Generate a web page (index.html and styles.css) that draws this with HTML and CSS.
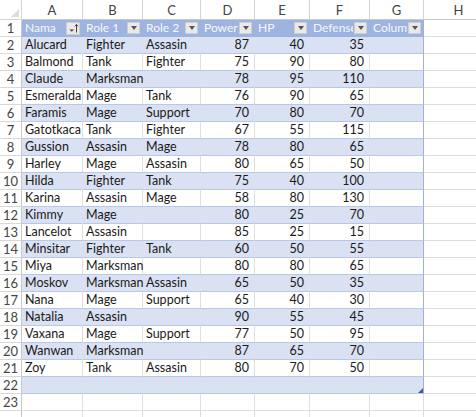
FILE: index.html
```html
<!DOCTYPE html>
<html>
<head>
<meta charset="utf-8">
<link rel="stylesheet" href="styles.css">
</head>
<body>
<div class="sheet">
  <div class="corner"><span class="tri"></span></div>
  <div class="ch">A</div><div class="ch">B</div><div class="ch">C</div><div class="ch">D</div><div class="ch">E</div><div class="ch">F</div><div class="ch">G</div><div class="ch">H</div>

  <div class="rh">1</div>
  <div class="c th"><span class="lbl">Nama</span><span class="dd sort"><svg width="11" height="10" viewBox="0 0 11 10"><path d="M1.5 6.5h4.5l-2.25 2.25z" fill="#444"/><path d="M8.5 9.5V1.5M6.8 3.3L8.5 1.5 10.2 3.3" stroke="#444" stroke-width="1" fill="none"/></svg></span></div>
  <div class="c th"><span class="lbl">Role 1</span><span class="dd"><i class="arr"></i></span></div>
  <div class="c th"><span class="lbl">Role 2</span><span class="dd"><i class="arr"></i></span></div>
  <div class="c th"><span class="lbl">Power</span><span class="dd"><i class="arr"></i></span></div>
  <div class="c th"><span class="lbl">HP</span><span class="dd"><i class="arr"></i></span></div>
  <div class="c th"><span class="lbl">Defense</span><span class="dd"><i class="arr"></i></span></div>
  <div class="c th last"><span class="lbl">Column1</span><span class="dd"><i class="arr"></i></span></div>
  <div class="c"></div>

  <div class="rh">2</div><div class="c t band"><span>Alucard</span></div><div class="c t band"><span>Fighter</span></div><div class="c t band"><span>Assasin</span></div><div class="c t band num">87</div><div class="c t band num">40</div><div class="c t band num">35</div><div class="c t band last"></div><div class="c"></div>
  <div class="rh">3</div><div class="c t"><span>Balmond</span></div><div class="c t"><span>Tank</span></div><div class="c t"><span>Fighter</span></div><div class="c t num">75</div><div class="c t num">90</div><div class="c t num">80</div><div class="c t last"></div><div class="c"></div>
  <div class="rh">4</div><div class="c t band"><span>Claude</span></div><div class="c t band"><span>Marksman</span></div><div class="c t band"></div><div class="c t band num">78</div><div class="c t band num">95</div><div class="c t band num">110</div><div class="c t band last"></div><div class="c"></div>
  <div class="rh">5</div><div class="c t"><span>Esmeralda</span></div><div class="c t"><span>Mage</span></div><div class="c t"><span>Tank</span></div><div class="c t num">76</div><div class="c t num">90</div><div class="c t num">65</div><div class="c t last"></div><div class="c"></div>
  <div class="rh">6</div><div class="c t band"><span>Faramis</span></div><div class="c t band"><span>Mage</span></div><div class="c t band"><span>Support</span></div><div class="c t band num">70</div><div class="c t band num">80</div><div class="c t band num">70</div><div class="c t band last"></div><div class="c"></div>
  <div class="rh">7</div><div class="c t"><span>Gatotkaca</span></div><div class="c t"><span>Tank</span></div><div class="c t"><span>Fighter</span></div><div class="c t num">67</div><div class="c t num">55</div><div class="c t num">115</div><div class="c t last"></div><div class="c"></div>
  <div class="rh">8</div><div class="c t band"><span>Gussion</span></div><div class="c t band"><span>Assasin</span></div><div class="c t band"><span>Mage</span></div><div class="c t band num">78</div><div class="c t band num">80</div><div class="c t band num">65</div><div class="c t band last"></div><div class="c"></div>
  <div class="rh">9</div><div class="c t"><span>Harley</span></div><div class="c t"><span>Mage</span></div><div class="c t"><span>Assasin</span></div><div class="c t num">80</div><div class="c t num">65</div><div class="c t num">50</div><div class="c t last"></div><div class="c"></div>
  <div class="rh">10</div><div class="c t band"><span>Hilda</span></div><div class="c t band"><span>Fighter</span></div><div class="c t band"><span>Tank</span></div><div class="c t band num">75</div><div class="c t band num">40</div><div class="c t band num">100</div><div class="c t band last"></div><div class="c"></div>
  <div class="rh">11</div><div class="c t"><span>Karina</span></div><div class="c t"><span>Assasin</span></div><div class="c t"><span>Mage</span></div><div class="c t num">58</div><div class="c t num">80</div><div class="c t num">130</div><div class="c t last"></div><div class="c"></div>
  <div class="rh">12</div><div class="c t band"><span>Kimmy</span></div><div class="c t band"><span>Mage</span></div><div class="c t band"></div><div class="c t band num">80</div><div class="c t band num">25</div><div class="c t band num">70</div><div class="c t band last"></div><div class="c"></div>
  <div class="rh">13</div><div class="c t"><span>Lancelot</span></div><div class="c t"><span>Assasin</span></div><div class="c t"></div><div class="c t num">85</div><div class="c t num">25</div><div class="c t num">15</div><div class="c t last"></div><div class="c"></div>
  <div class="rh">14</div><div class="c t band"><span>Minsitar</span></div><div class="c t band"><span>Fighter</span></div><div class="c t band"><span>Tank</span></div><div class="c t band num">60</div><div class="c t band num">50</div><div class="c t band num">55</div><div class="c t band last"></div><div class="c"></div>
  <div class="rh">15</div><div class="c t"><span>Miya</span></div><div class="c t"><span>Marksman</span></div><div class="c t"></div><div class="c t num">80</div><div class="c t num">80</div><div class="c t num">65</div><div class="c t last"></div><div class="c"></div>
  <div class="rh">16</div><div class="c t band"><span>Moskov</span></div><div class="c t band"><span>Marksman</span></div><div class="c t band"><span>Assasin</span></div><div class="c t band num">65</div><div class="c t band num">50</div><div class="c t band num">35</div><div class="c t band last"></div><div class="c"></div>
  <div class="rh">17</div><div class="c t"><span>Nana</span></div><div class="c t"><span>Mage</span></div><div class="c t"><span>Support</span></div><div class="c t num">65</div><div class="c t num">40</div><div class="c t num">30</div><div class="c t last"></div><div class="c"></div>
  <div class="rh">18</div><div class="c t band"><span>Natalia</span></div><div class="c t band"><span>Assasin</span></div><div class="c t band"></div><div class="c t band num">90</div><div class="c t band num">55</div><div class="c t band num">45</div><div class="c t band last"></div><div class="c"></div>
  <div class="rh">19</div><div class="c t"><span>Vaxana</span></div><div class="c t"><span>Mage</span></div><div class="c t"><span>Support</span></div><div class="c t num">77</div><div class="c t num">50</div><div class="c t num">95</div><div class="c t last"></div><div class="c"></div>
  <div class="rh">20</div><div class="c t band"><span>Wanwan</span></div><div class="c t band"><span>Marksman</span></div><div class="c t band"></div><div class="c t band num">87</div><div class="c t band num">65</div><div class="c t band num">70</div><div class="c t band last"></div><div class="c"></div>
  <div class="rh">21</div><div class="c t"><span>Zoy</span></div><div class="c t"><span>Tank</span></div><div class="c t"><span>Assasin</span></div><div class="c t num">80</div><div class="c t num">70</div><div class="c t num">50</div><div class="c t last"></div><div class="c"></div>
  <div class="rh">22</div><div class="c t band"></div><div class="c t band"></div><div class="c t band"></div><div class="c t band"></div><div class="c t band"></div><div class="c t band"></div><div class="c t band last end"><span class="grip"></span></div><div class="c"></div>
  <div class="rh">23</div><div class="c"></div><div class="c"></div><div class="c"></div><div class="c"></div><div class="c"></div><div class="c"></div><div class="c"></div><div class="c"></div>
  <div class="rh"></div><div class="c"></div><div class="c"></div><div class="c"></div><div class="c"></div><div class="c"></div><div class="c"></div><div class="c"></div><div class="c"></div>
</div>
</body>
</html>
```
FILE: styles.css
```css
* { box-sizing: border-box; }
html, body { margin: 0; padding: 0; background: #fff; }
body { overflow: hidden; }
.sheet {
  display: grid;
  grid-template-columns: 22px 61px 60px 58px 54px 55px 60px 54px 70px;
  grid-template-rows: 20px repeat(24, 17px);
  font-family: Lato, "Liberation Sans", sans-serif;
  font-size: 12.5px;
  color: #1a1a1a;
}
.corner {
  border-right: 1px solid #d4d4d4;
  border-bottom: 1px solid #d4d4d4;
  position: relative;
}
.tri {
  position: absolute;
  right: 2px;
  bottom: 2px;
  width: 0; height: 0;
  border-left: 8px solid transparent;
  border-bottom: 8px solid #dcdcdc;
}
.ch {
  border-right: 1px solid #d4d4d4;
  border-bottom: 1px solid #c8c8c8;
  display: flex;
  align-items: center;
  justify-content: center;
  color: #444;
  font-size: 13px;
  padding-top: 1px;
}
.rh {
  border-right: 1px solid #c8c8c8;
  border-bottom: 1px solid #d8d8d8;
  display: flex;
  align-items: flex-end;
  justify-content: center;
  color: #444;
  font-size: 13px;
  line-height: 16px;
}
.c {
  border-right: 1px solid #dedede;
  border-bottom: 1px solid #dedede;
  display: flex;
  align-items: flex-end;
  padding: 0 3px 0 3px;
  white-space: nowrap;
  line-height: 16px;
  min-width: 0;
}
.c > span:not(.lbl):not(.dd):not(.grip) { position: relative; z-index: 1; }
.t { border-bottom-color: #b7c8e8; }
.band { background: #d9e1f3; border-right-color: #d9e1f3; }
.num { justify-content: flex-end; padding-right: 5px; }
.last { border-right-color: #9fb2d6; }
.th {
  background: #9cb4df;
  border-right-color: #9cb4df;
  border-bottom-color: #9cb4df;
  color: #f6f8fd;
  align-items: center;
  padding: 0 2px 0 3px;
  gap: 1px;
  font-size: 12px;
}
.th.last { border-right-color: #9fb2d6; }
.lbl { flex: 1; overflow: hidden; min-width: 0; line-height: 16px; }
.dd {
  flex: none;
  width: 13px;
  height: 12px;
  background: #e9e9e9;
  border: 1px solid #cdcdcd;
  display: flex;
  align-items: center;
  justify-content: center;
}
.dd.sort { width: 14px; height: 13px; }
.arr {
  width: 0; height: 0;
  border-left: 3.5px solid transparent;
  border-right: 3.5px solid transparent;
  border-top: 4px solid #555;
}
.end { position: relative; }
.grip {
  position: absolute;
  right: 0;
  bottom: 0;
  width: 0; height: 0;
  border-left: 5px solid transparent;
  border-bottom: 5px solid #3d5a9e;
}
```
